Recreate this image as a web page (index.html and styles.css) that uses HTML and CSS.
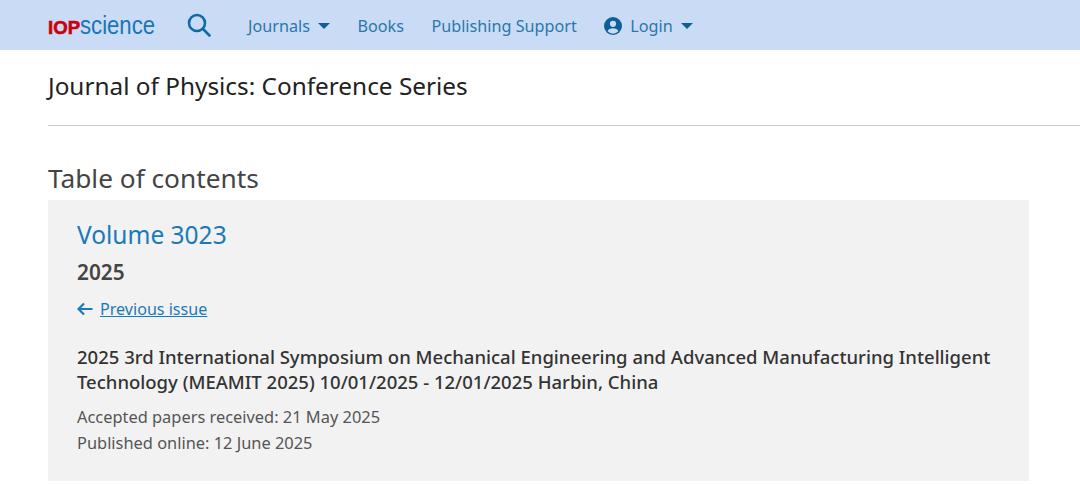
FILE: index.html
```html
<!DOCTYPE html>
<html lang="en">
<head>
    <meta charset="UTF-8">
    <title>Journal of Physics: Conference Series - Table of contents</title>
    <link rel="stylesheet" href="styles.css">
</head>
<body>
    <header class="topbar">
        <a class="logo" href="#"><span class="logo-iop">IOP</span><span class="logo-science">science</span></a>
        <svg class="search-icon" viewBox="0 0 24 24" width="24" height="24" fill="none" stroke="#0f6ba8" stroke-width="2.6" stroke-linecap="round">
            <circle cx="10" cy="10" r="8"/>
            <path d="M16 16l6.5 6.5"/>
        </svg>
        <nav class="nav">
            <a class="nav-link" href="#">Journals <span class="caret"></span></a>
            <a class="nav-link" href="#">Books</a>
            <a class="nav-link" href="#">Publishing Support</a>
            <a class="nav-link" href="#">
                <svg class="user-icon" viewBox="0 0 18 18" width="18" height="18">
                    <circle cx="9" cy="9" r="9" fill="#0f5f96"/>
                    <circle cx="9" cy="6.8" r="3.1" fill="#cadcf5"/>
                    <path d="M3.6 14.2c.9-2.2 2.8-3 5.4-3s4.5.8 5.4 3a7.2 7.2 0 0 1-10.8 0z" fill="#cadcf5"/>
                </svg>
                Login <span class="caret"></span>
            </a>
        </nav>
    </header>

    <main class="page">
        <div class="journal-title">Journal of Physics: Conference Series</div>
        <h2 class="toc-heading">Table of contents</h2>
        <section class="issue">
            <h3 class="volume">Volume 3023</h3>
            <div class="year">2025</div>
            <div class="prev">
                <svg class="arrow" viewBox="0 0 16 14" width="16" height="14" fill="none" stroke="#1a7ab8" stroke-width="2.2">
                    <path d="M15.5 7H1.5M7 1.5L1.5 7 7 12.5"/>
                </svg>
                <a href="#">Previous issue</a>
            </div>
            <div class="conf">2025 3rd International Symposium on Mechanical Engineering and Advanced Manufacturing Intelligent Technology (MEAMIT 2025) 10/01/2025 - 12/01/2025 Harbin, China</div>
            <p class="meta">Accepted papers received: 21 May 2025</p>
            <p class="meta">Published online: 12 June 2025</p>
        </section>
    </main>
</body>
</html>
```

FILE: styles.css
```css
* {
    box-sizing: border-box;
}
body {
    margin: 0;
    font-family: "Noto Sans", "Open Sans", sans-serif;
    background-color: white;
    color: #333;
}
a {
    text-decoration: none;
}
.topbar {
    display: flex;
    align-items: center;
    height: 50px;
    padding-left: 48px;
    background-color: #cadcf5;
}
.logo {
    display: flex;
    align-items: baseline;
    width: 107px;
    line-height: 1;
}
.logo-iop {
    font-family: "Liberation Sans", sans-serif;
    font-weight: bold;
    font-size: 18.6px;
    color: #c8000f;
    -webkit-text-stroke: 0.6px #c8000f;
}
.logo-science {
    font-family: "Liberation Sans", sans-serif;
    font-size: 25px;
    color: #1a75b5;
    transform: scaleX(0.885);
    transform-origin: left;
}
.search-icon {
    margin-left: 32px;
}
.nav {
    display: flex;
    align-items: center;
    gap: 27.5px;
    margin-left: 37px;
    padding-top: 2px;
}
.nav-link {
    display: flex;
    align-items: center;
    font-size: 16.2px;
    color: #2a76ad;
}
.caret {
    width: 0;
    height: 0;
    margin-left: 8px;
    border-left: 6px solid transparent;
    border-right: 6px solid transparent;
    border-top: 6px solid #0f5f96;
}
.user-icon {
    margin-right: 8px;
}
.page {
    padding-left: 48px;
}
.journal-title {
    height: 76px;
    padding-top: 19px;
    border-bottom: 1px solid #ccc;
    font-size: 24.35px;
    line-height: 34px;
    color: #222;
}
.toc-heading {
    margin: 31px 0 1px;
    font-size: 26.25px;
    font-weight: normal;
    line-height: 42px;
    color: #444;
}
.issue {
    width: 981px;
    height: 281px;
    padding: 17px 29px;
    background-color: #f2f2f2;
}
.volume {
    margin: 0;
    font-size: 24.5px;
    font-weight: normal;
    line-height: 36px;
    color: #1a7ab8;
}
.year {
    margin-top: 6px;
    font-size: 20.8px;
    font-weight: 600;
    line-height: 26px;
    color: #444;
}
.prev {
    display: flex;
    align-items: center;
    gap: 7px;
    margin-top: 12px;
    font-size: 16.1px;
    line-height: 24px;
}
.prev a {
    color: #1a7ab8;
    text-decoration: underline;
}
.conf {
    margin-top: 23px;
    font-size: 18.5px;
    font-weight: 500;
    line-height: 25px;
}
.meta {
    margin: 0;
    font-size: 16.4px;
    line-height: 26px;
    color: #555;
}
.conf + .meta {
    margin-top: 10px;
}
```
